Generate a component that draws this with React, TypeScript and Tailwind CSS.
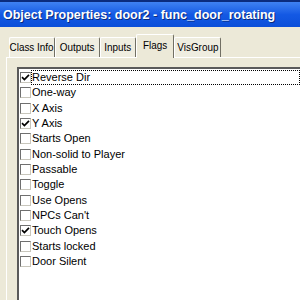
import React from "react";

const items: { label: string; checked: boolean }[] = [
  { label: "Reverse Dir", checked: true },
  { label: "One-way", checked: false },
  { label: "X Axis", checked: false },
  { label: "Y Axis", checked: true },
  { label: "Starts Open", checked: false },
  { label: "Non-solid to Player", checked: false },
  { label: "Passable", checked: false },
  { label: "Toggle", checked: false },
  { label: "Use Opens", checked: false },
  { label: "NPCs Can't", checked: false },
  { label: "Touch Opens", checked: true },
  { label: "Starts locked", checked: false },
  { label: "Door Silent", checked: false },
];

const tabs = [
  { label: "Class Info", w: "w-[46px]" },
  { label: "Outputs", w: "w-[45px]" },
  { label: "Inputs", w: "w-[36px]" },
  { label: "Flags", w: "w-[38px]", sel: true },
  { label: "VisGroup", w: "w-[47px]" },
];

function Check({ checked }: { checked: boolean }) {
  return (
    <div className="w-[11px] h-[11px] shrink-0 bg-white border border-t-[#6f6f6f] border-l-[#6f6f6f] border-r-[#c8c6bc] border-b-[#c8c6bc] flex items-center justify-center">
      {checked && (
        <svg width="9" height="9" viewBox="0 0 9 9">
          <path d="M1 4.2 L3.4 6.6 L8 1.8" stroke="#000" strokeWidth="1.7" fill="none" />
        </svg>
      )}
    </div>
  );
}

export default function App() {
  return (
    <div
      className="w-[300px] h-[300px] overflow-hidden bg-[#ECE9D8] flex flex-col"
      style={{ fontFamily: '"Liberation Sans", Arial, sans-serif' }}
    >
      <div className="h-[27px] shrink-0 border-t-2 border-[#0b2c7e] bg-gradient-to-b from-[#3f82f2] via-[#1459e4] to-[#0b4fd9] flex items-center pl-[3px] pt-[1px]">
        <span className="text-white font-bold text-[12.5px] leading-none whitespace-nowrap [text-shadow:1px_1px_0_#0a2a7a]">
          Object Properties: door2 - func_door_rotating
        </span>
      </div>
      <div className="h-[30px] shrink-0 flex items-end pl-[9px] relative z-10">
        {tabs.map((t) =>
          t.sel ? (
            <div
              key={t.label}
              className={`${t.w} h-[24px] mb-[-1px] bg-[#ECE9D8] border-l border-t border-r border-l-white border-t-white border-r-[#716f64] rounded-t-[2px] flex items-start justify-center pt-[4px] text-[11.5px] text-black leading-[13px] whitespace-nowrap`}
            >
              <span className="inline-block scale-x-[0.86]">{t.label}</span>
            </div>
          ) : (
            <div
              key={t.label}
              className={`${t.w} h-[20px] bg-[#EFEDE0] border-l border-t border-r border-l-white border-t-white border-r-[#716f64] rounded-t-[2px] flex items-center justify-center text-[11.5px] text-black leading-[13px] whitespace-nowrap`}
            >
              <span className="inline-block scale-x-[0.86]">{t.label}</span>
            </div>
          )
        )}
      </div>
      <div className="flex-1 ml-[6px] border-l border-t border-white pl-[10px] pt-[9px] flex flex-col">
        <div className="flex-1 bg-white border-l-2 border-t-2 border-l-[#5a5a5a] border-t-[#5a5a5a] pl-[1px] pt-[1px] flex flex-col">
          {items.map((it, i) => (
            <div key={it.label} className="h-[15.33px] shrink-0 flex items-center">
              <Check checked={it.checked} />
              <div
                className={`flex-1 h-full flex items-center text-[11px] leading-none text-black whitespace-nowrap ${
                  i === 0 ? "border border-dotted border-black" : "border border-transparent"
                }`}
              >
                {it.label}
              </div>
            </div>
          ))}
        </div>
      </div>
    </div>
  );
}
